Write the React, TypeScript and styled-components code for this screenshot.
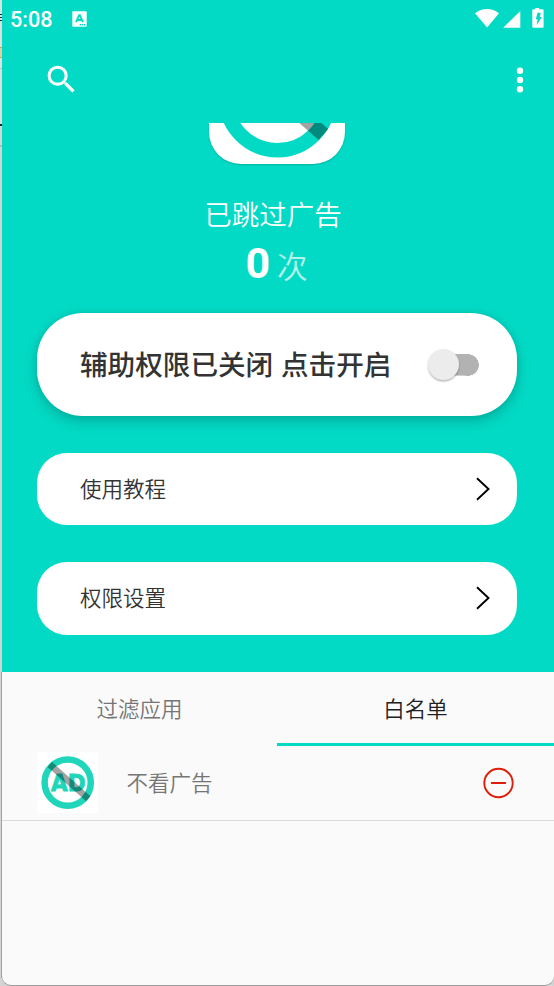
import React, { useState } from "react";
import styled, { createGlobalStyle } from "styled-components";

const TEAL = "#03dac5";

const Global = createGlobalStyle`
  * { box-sizing: border-box; }
  body {
    margin: 0;
    background: #d3d3d3;
    font-family: Roboto, "Noto Sans CJK SC", sans-serif;
  }
  button { font: inherit; border: 0; padding: 0; background: none; cursor: pointer; }
  svg { display: block; flex: none; }
`;

const Desktop = styled.div`
  display: flex;
  height: 986px;
  width: 554px;
  overflow: hidden;
`;

const Edge = styled.div`
  flex: none;
  width: 2px;
  background:
    linear-gradient(#a2a2a2, #a2a2a2) 1px 672px / 1px 306px no-repeat,
    linear-gradient(
    #d8e4e0 0 14px, #222 14px 15px, #d8e4e0 15px 17px, #333 17px 18px,
    #d8e4e0 18px 20px, #222 20px 21px, #dedede 21px 47px, #d9a441 47px 48px,
    #e6cda0 48px 57px, #d9a441 57px 58px, #e0e0e0 58px 68px, #bdbdbd 68px 69px,
    #dedede 69px 124px, #222 124px 126px, #d6d6d6 126px 145px,
    #b9b9b9 145px 147px, #d4d4d4 147px
  );
`;

const Phone = styled.div`
  flex: 1;
  display: flex;
  flex-direction: column;
  height: 986px;
  background: #fafafa;
  border-radius: 0 0 9px 9px;
  box-shadow: inset 0 -1px 0 #9d9d9d;
  overflow: hidden;
`;

const Hero = styled.header`
  display: flex;
  flex-direction: column;
  height: 671.5px;
  flex: none;
  background: ${TEAL};
`;

const StatusBar = styled.div`
  display: flex;
  align-items: center;
  height: 38px;
  padding: 0 10px 0 8px;
  color: #fff;
`;

const Clock = styled.span`
  width: 62px;
  font-size: 21.6px;
  font-weight: 500;
  line-height: 38px;
  padding-top: 2px;
`;

const StatusIcons = styled.div`
  display: flex;
  margin-left: auto;
`;

const Toolbar = styled.div`
  display: flex;
  align-items: center;
  justify-content: space-between;
  height: 85px;
  padding: 0 22px 2px 41px;
`;

const Scroller = styled.main`
  display: flex;
  flex-direction: column;
  align-items: center;
  flex: 1;
  overflow: hidden;
`;

const LogoCard = styled.div`
  flex: none;
  width: 136px;
  height: 136px;
  margin-top: -95px;
  margin-right: 2px;
  border-radius: 32px;
  background: #fff;
  box-shadow: 0 1px 2px rgba(0, 0, 0, 0.18);
  overflow: hidden;
`;

const Caption = styled.div`
  margin-top: 32px;
  margin-right: 10px;
  height: 40px;
  line-height: 40px;
  font-size: 27.5px;
  font-weight: 350;
  color: #fff;
`;

const Count = styled.div`
  display: flex;
  align-items: baseline;
  gap: 7px;
  height: 54px;
  line-height: 54px;
  margin-right: 3px;
  color: #fff;
`;

const CountValue = styled.b`
  font-size: 43px;
  font-weight: 700;
`;

const CountUnit = styled.span`
  font-size: 30.5px;
  font-weight: 350;
  opacity: 0.7;
`;

const Card = styled.button<{ $main?: boolean }>`
  flex: none;
  display: flex;
  align-items: center;
  justify-content: space-between;
  width: 480px;
  height: ${(p) => (p.$main ? "103px" : "72.5px")};
  margin: ${(p) => (p.$main ? "23px 2px 0 0" : "36.8px 2px 0 0")};
  padding: ${(p) => (p.$main ? "0 38px 0 43px" : "0 26px 0 43px")};
  border-radius: ${(p) => (p.$main ? "46px" : "30px")};
  background: #fff;
  color: #333;
  font-size: ${(p) => (p.$main ? "27.6px" : "21.5px")};
  font-weight: ${(p) => (p.$main ? 500 : 350)};
  box-shadow: ${(p) =>
    p.$main ? "0 5px 14px rgba(0,0,0,.2), 0 0 6px rgba(0,0,0,.06)" : "none"};
`;

const CardLabel = styled.span`
  padding-bottom: 3px;
  word-spacing: 1px;
`;

const Track = styled.span<{ $on: boolean }>`
  display: flex;
  align-items: center;
  justify-content: ${(p) => (p.$on ? "flex-end" : "flex-start")};
  width: 51px;
  height: 34px;
  background: linear-gradient(#b2b2b2, #b2b2b2);
  background: radial-gradient(circle at 40px 17px, #b2b2b2 10.5px, transparent 11px),
    linear-gradient(#b2b2b2, #b2b2b2) 10px 6.2px / 30px 21.6px no-repeat;
`;

const Thumb = styled.span`
  width: 31px;
  height: 31px;
  border-radius: 50%;
  background: #ececec;
  box-shadow: 0 1.5px 2px rgba(0, 0, 0, 0.28);
`;

const Tabs = styled.nav`
  display: grid;
  grid-template-columns: 275px 277px;
  flex: none;
  height: 74.5px;
`;

const Tab = styled.button<{ $active: boolean }>`
  color: ${(p) => (p.$active ? "#212121" : "#757575")};
  font-size: 21.5px;
  font-weight: 350;
  border-bottom: 3.5px solid ${(p) => (p.$active ? TEAL : "transparent")};
`;

const AppRow = styled.div`
  display: flex;
  align-items: center;
  height: 75px;
  flex: none;
  padding: 0 39px 2px 35px;
  border-bottom: 1px solid #d9d9d9;
`;

const AppIcon = styled.div`
  width: 61px;
  height: 61px;
  background: #fff;
`;

const AppName = styled.span`
  flex: 1;
  margin-left: 28.5px;
  padding-bottom: 1px;
  font-size: 21.5px;
  font-weight: 350;
  color: #757575;
`;

function NoAdRing({ color }: { color: string }) {
  return <circle cx="30.7" cy="30.6" r="23.1" fill="none" stroke={color} strokeWidth="6.5" />;
}

function NoAdSlash() {
  return <path d="M12.8 12.5 51.3 46.7" stroke="#000" strokeOpacity=".36" strokeWidth="6.6" />;
}

function NoAdBadge() {
  return (
    <svg width="136" height="136" viewBox="0 -1.1 61 61">
      <NoAdRing color={TEAL} />
      <NoAdSlash />
    </svg>
  );
}

function NoAdIcon() {
  const color = "#1fd6bb";
  return (
    <svg width="61" height="61" viewBox="0 0 61 61">
      <NoAdRing color={color} />
      <text
        x="14"
        y="38.6"
        textLength="34.5"
        lengthAdjust="spacingAndGlyphs"
        fontFamily="DejaVu Sans"
        fontWeight="700"
        fontSize="22.5"
        fill={color}
        stroke={color}
        strokeWidth="0.9"
      >
        AD
      </text>
      <NoAdSlash />
    </svg>
  );
}

function Chevron() {
  return (
    <svg width="16" height="26" viewBox="0 0 16 26" fill="none" stroke="#000" strokeWidth="1.9">
      <path d="M2 2.2 13.5 13 2 23.8" />
    </svg>
  );
}

export default function App() {
  const [enabled, setEnabled] = useState(false);
  const [tab, setTab] = useState(1);

  return (
    <>
      <Global />
      <Desktop>
        <Edge />
        <Phone>
          <Hero>
            <StatusBar>
              <Clock>5:08</Clock>
              <svg width="15" height="16" viewBox="0 0 15 16">
                <rect x=".3" y=".3" width="14.4" height="15.4" rx="1" fill="#fff" />
                <path
                  d="M4.1 11.2 7.2 4.2h.6l3.1 7M5.2 9h4.6"
                  fill="none"
                  stroke={TEAL}
                  strokeWidth="1.9"
                />
                <path d="M7.7 13.7h1.5m.6 0h1.5m.6 0h1.5" stroke={TEAL} strokeWidth="1.4" />
              </svg>
              <StatusIcons>
                <svg width="69" height="22" viewBox="0 0 69 22" fill="#fff">
                  <path d="M0 5.300C7-.4 17-.4 24 5.300L12.100 19.500z" />
                  <path d="M45.300 3v16.700H28.200z" />
                  <path d="M60.200 0h4v1.300h3.200q1.200 0 1.200 1.200v16q0 1.200-1.200 1.200H58.500q-1.200 0-1.200-1.200V2.500q0-1.200 1.200-1.200h1.700z" />
                  <path d="M62.500 4.800h3.300l-1 4.200h2L61.800 17l.8-5.700h-1.800z" fill={TEAL} />
                </svg>
              </StatusIcons>
            </StatusBar>
            <Toolbar>
              <svg width="37" height="37" viewBox="0 0 24 24" fill="#fff">
                <path d="M15.5 14h-.79l-.28-.27A6.471 6.471 0 0 0 16 9.5 6.5 6.5 0 1 0 9.5 16c1.61 0 3.09-.59 4.23-1.57l.27.28v.79l5 4.99L20.49 19l-4.99-5zm-6 0C7.01 14 5 11.99 5 9.5S7.01 5 9.5 5 14 7.01 14 9.5 11.99 14 9.5 14z" />
              </svg>
              <svg width="24" height="30" viewBox="0 0 24 30" fill="#fff">
                <circle cx="12" cy="5.8" r="3.2" />
                <circle cx="12" cy="15" r="3.2" />
                <circle cx="12" cy="24.200" r="3.2" />
              </svg>
            </Toolbar>
            <Scroller>
              <LogoCard>
                <NoAdBadge />
              </LogoCard>
              <Caption>已跳过广告</Caption>
              <Count>
                <CountValue>0</CountValue>
                <CountUnit>次</CountUnit>
              </Count>
              <Card $main onClick={() => setEnabled(!enabled)}>
                <CardLabel>辅助权限已关闭 点击开启</CardLabel>
                <Track $on={enabled}>
                  <Thumb />
                </Track>
              </Card>
              <Card>
                <CardLabel>使用教程</CardLabel>
                <Chevron />
              </Card>
              <Card>
                <CardLabel>权限设置</CardLabel>
                <Chevron />
              </Card>
            </Scroller>
          </Hero>
          <Tabs>
            {["过滤应用", "白名单"].map((name, i) => (
              <Tab key={name} $active={tab === i} onClick={() => setTab(i)}>
                {name}
              </Tab>
            ))}
          </Tabs>
          <AppRow>
            <AppIcon>
              <NoAdIcon />
            </AppIcon>
            <AppName>不看广告</AppName>
            <svg width="33" height="33" viewBox="0 0 33 33" fill="none" stroke="#dd1e08" strokeWidth="1.9">
              <circle cx="16.500" cy="17" r="14.200" />
              <path d="M9.700 17h13.600" strokeLinecap="round" />
            </svg>
          </AppRow>
        </Phone>
      </Desktop>
    </>
  );
}
